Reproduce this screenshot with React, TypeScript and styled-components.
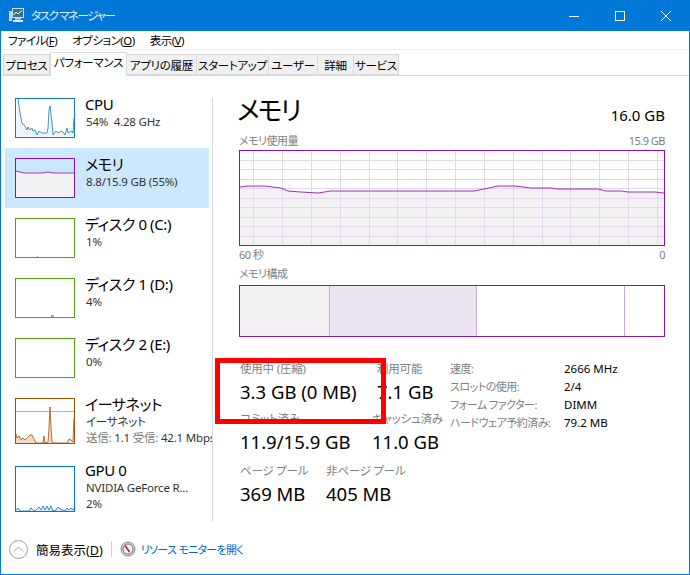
import React from 'react';
import styled, { createGlobalStyle } from 'styled-components';

const FONT = '"Noto Sans", "Noto Sans CJK JP", sans-serif';
const PURPLE = '#8b12ae';

const GlobalStyle = createGlobalStyle`
  html, body { margin: 0; padding: 0; background: #fff; }
  * { box-sizing: border-box; }
`;

const Window = styled.div`
  position: relative;
  width: 690px;
  height: 575px;
  display: flex;
  flex-direction: column;
  border: 1px solid #0078d7;
  border-top: 0;
  background: #fff;
  color: #000;
  font-family: ${FONT};
  font-size: 12px;
  font-feature-settings: "palt";
  overflow: hidden;
`;

const TitleBar = styled.div`
  height: 31px;
  flex: none;
  display: flex;
  align-items: center;
  background: #0078d7;
  color: #fff;
  padding-left: 8px;
`;

const TitleText = styled.span`
  margin-left: 7px;
  font-size: 11.5px;
  letter-spacing: -1.4px;
  line-height: 31px;
  color: #e8f2fb;
`;

const WindowButtons = styled.div`
  margin-left: auto;
  display: flex;
`;

const WindowButton = styled.div`
  width: 46px;
  height: 31px;
  display: flex;
  align-items: center;
  justify-content: center;
`;

const MenuBar = styled.div`
  height: 19px;
  flex: none;
  display: flex;
  padding-left: 7px;
  gap: 15px;
  line-height: 20px;
  font-size: 11.5px;
  letter-spacing: -0.5px;
  border-bottom: 1px solid #f0f0f0;
`;

const TabStrip = styled.div`
  height: 26px;
  flex: none;
  display: flex;
  align-items: flex-end;
  padding-left: 2px;
  border-bottom: 1px solid #d9d9d9;
`;

const Tab = styled.div<{ $width: number; $active?: boolean }>`
  width: ${({ $width }) => $width}px;
  height: ${({ $active }) => ($active ? 24 : 21)}px;
  margin-bottom: ${({ $active }) => ($active ? -1 : 0)}px;
  background: ${({ $active }) => ($active ? '#fff' : '#f0f0f0')};
  border: 1px solid #d9d9d9;
  border-left-width: ${({ $active }) => ($active ? 1 : 0)}px;
  border-bottom-width: ${({ $active }) => ($active ? 0 : 1)}px;
  font-size: 11.5px;
  letter-spacing: -0.3px;
  line-height: ${({ $active }) => ($active ? 20 : 21)}px;
  text-align: center;
  white-space: nowrap;
  position: relative;
  z-index: ${({ $active }) => ($active ? 1 : 0)};
  &:first-child { border-left-width: 1px; }
`;

const Content = styled.div`
  flex: 1;
  display: flex;
  min-height: 0;
`;

const Sidebar = styled.div`
  width: 211px;
  flex: none;
  padding: 12px 0 0 4px;
  overflow: hidden;
`;

const Item = styled.div<{ $selected?: boolean }>`
  width: 204px;
  display: flex;
  gap: 10px;
  padding: 10px 0 10px 10px;
  background: ${({ $selected }) => ($selected ? '#cce8ff' : 'transparent')};
`;

const Graph = styled.svg<{ $height?: number }>`
  width: 60px;
  height: ${({ $height }) => $height ?? 40}px;
  flex: none;
  display: block;
`;

const ItemText = styled.div<{ $top?: number }>`
  min-width: 0;
  margin-top: ${({ $top }) => $top ?? -4}px;
  white-space: nowrap;
`;

const ItemName = styled.div`
  font-size: 15px;
  letter-spacing: -0.4px;
  line-height: 20px;
`;

const ItemSub = styled.div`
  font-size: 11.5px;
  letter-spacing: -0.2px;
  line-height: 16px;
  color: #333;
  padding-left: 1px;
`;

const Muted = styled.span`
  color: #777;
`;

const Divider = styled.div`
  width: 1px;
  height: 424px;
  margin-top: 22px;
  background: #d9d9d9;
  flex: none;
`;

const Main = styled.div`
  flex: 1;
  padding: 16px 24px 0 25px;
`;

const Header = styled.div`
  height: 36px;
  display: flex;
  justify-content: space-between;
  align-items: flex-end;
`;

const Title = styled.h1`
  margin: 0 0 0 -1px;
  font-size: 26px;
  letter-spacing: -2px;
  font-weight: 400;
  line-height: 36px;
`;

const Total = styled.div`
  font-size: 15px;
  line-height: 20px;
  margin-bottom: 3px;
`;

const CaptionRow = styled.div<{ $top: number }>`
  display: flex;
  justify-content: space-between;
  padding-left: 1px;
  margin-top: ${({ $top }) => $top}px;
  font-size: 11px;
  letter-spacing: -0.5px;
  line-height: 14px;
  color: #808080;
`;

const Chart = styled.svg`
  display: block;
  width: 426px;
  height: 96px;
  margin: 2px 0 0 1px;
`;

const Composition = styled.div`
  display: flex;
  width: 426px;
  height: 52px;
  margin: 4px 0 0 1px;
  border: 1px solid ${PURPLE};
`;

const Segment = styled.div<{ $width?: number; $color: string; $line?: boolean }>`
  flex: ${({ $width }) => ($width ? `0 0 ${$width}px` : '1')};
  background: ${({ $color }) => $color};
  border-right: ${({ $line }) => ($line ? '1px solid #c9a6da' : '0')};
`;

const Stats = styled.div`
  display: flex;
  margin: 25px 0 0 2px;
`;

const StatColumn = styled.div`
  width: 210px;
  flex: none;
`;

const StatRow = styled.div<{ $first: number; $height: number }>`
  height: ${({ $height }) => $height}px;
  display: grid;
  grid-template-columns: ${({ $first }) => $first}px auto;
`;

const StatLabel = styled.div`
  font-size: 11.5px;
  letter-spacing: -0.2px;
  line-height: 14px;
  color: #808080;
  white-space: nowrap;
`;

const StatValue = styled.div`
  margin-top: 4px;
  font-size: 18.5px;
  line-height: 24px;
  white-space: nowrap;
`;

const Specs = styled.div`
  display: grid;
  grid-template-columns: 114px auto;
  grid-auto-rows: 18px;
  margin-top: -2px;
  line-height: 18px;
  white-space: nowrap;
`;

const SpecLabel = styled.div`
  font-size: 11px;
  letter-spacing: -0.5px;
  color: #808080;
`;

const SpecValue = styled.div`
  font-size: 11.5px;
`;

const Highlight = styled.div`
  position: absolute;
  left: 214px;
  top: 358px;
  width: 171px;
  height: 66px;
  border: 5px solid #ff0000;
  pointer-events: none;
`;

const Footer = styled.div`
  height: 50px;
  flex: none;
  display: flex;
  align-items: center;
  padding-left: 8px;
`;

const FooterLabel = styled.span`
  margin-left: 8px;
  font-size: 12.5px;
`;

const FooterSep = styled.div`
  width: 1px;
  height: 16px;
  margin: 0 8px 0 8px;
  background: #d0d0d0;
`;

const FooterLink = styled.span`
  margin-left: 5px;
  font-size: 11px;
  letter-spacing: -0.7px;
  color: #0066cc;
`;

const HLINES = [10, 19, 29, 38, 48, 57, 67, 76, 86];
const VLINES = [14, 43, 72, 101, 130, 158, 187, 216, 245, 274, 303, 331, 360, 389, 418];
const MEMORY_LINE =
  '1,37 9,36 26,36 42,38 49,41 62,42 79,43 92,41 235,41 245,39 259,36 276,36 292,38 312,38 319,39 359,39 367,41 382,41 389,42 416,42 425,43';

function MemoryChart() {
  return (
    <Chart viewBox="0 0 426 96">
      <polygon points={`1,95 ${MEMORY_LINE} 425,95`} fill="#f3f1f4" />
      {HLINES.map((y) => (
        <line key={y} x1="0" x2="426" y1={y + 0.5} y2={y + 0.5} stroke="#e6d5ee" />
      ))}
      {VLINES.map((x) => (
        <line key={x} x1={x + 0.5} x2={x + 0.5} y1="0" y2="96" stroke="#e6d5ee" />
      ))}
      <polyline points={MEMORY_LINE} fill="none" stroke={PURPLE} strokeWidth="1" opacity="0.85" />
      <rect x="0.5" y="0.5" width="425" height="95" fill="none" stroke={PURPLE} />
    </Chart>
  );
}

type MiniProps = { color: string; fill?: string; points?: string; height?: number; children?: React.ReactNode };

function MiniGraph({ color, fill, points, height = 40, children }: MiniProps) {
  return (
    <Graph $height={height} viewBox={`0 0 60 ${height}`}>
      {points && <polygon points={`0,${height} ${points} 60,${height}`} fill={fill} />}
      {children}
      {points && <polyline points={points} fill="none" stroke={color} strokeWidth="1" opacity="0.8" />}
      <rect x="0.5" y="0.5" width="59" height={height - 1} fill="none" stroke={color} />
    </Graph>
  );
}

const CPU_POINTS =
  '3,1 5,15 7,25 10,28 12,32 13,29 15,32 17,30 18,33 20,32 22,37 24,33 27,35 29,35 32,35 33,30 34,12 35,8 37,25 38,37 41,33 43,35 47,33 50,37 52,30 53,35 57,33 58,35 59,20';
const NET_POINTS =
  '1,36 2,40 4,38 6,42 8,40 10,42 13,39 15,37 17,37 19,41 21,45 28,45 29,38 30,45 33,44 34,30 35,9 36,28 37,44 39,45 52,45 54,41 56,42 58,44 59,20';
const GPU_POINTS =
  '1,44 3,42 5,45 14,45 16,42 18,44 20,45 24,41 26,44 28,40 30,44 32,40 34,44 36,40 38,45 41,44 43,41 45,43 48,44 50,45 52,42 54,44 56,42 58,44 59,42';

function TaskIcon() {
  return (
    <svg width="15" height="15" viewBox="0 0 15 15">
      <rect x="0" y="3" width="3" height="10" fill="#c8d0d4" />
      <rect x="3.5" y="0.5" width="11" height="9" fill="#3b6f8f" stroke="#c9d6dd" />
      <polyline points="4.5,7 7,4 9,6 13,2.5" fill="none" stroke="#ffffff" />
      <rect x="6" y="10" width="6" height="1.5" fill="#c9d6dd" />
      <rect x="4" y="12" width="10" height="2" fill="#e6e6e6" />
    </svg>
  );
}

function ResourceIcon() {
  return (
    <svg width="16" height="16" viewBox="0 0 16 16">
      <circle cx="8" cy="8" r="7" fill="#d8d8d8" stroke="#8a8a8a" />
      <circle cx="8" cy="8" r="5" fill="#f7f7f7" stroke="#6f6f6f" />
      <line x1="5" y1="4.5" x2="9.5" y2="11" stroke="#d01818" strokeWidth="1.6" />
    </svg>
  );
}

export default function App() {
  return (
    <>
      <GlobalStyle />
      <Window>
        <TitleBar>
          <TaskIcon />
          <TitleText>タスク マネージャー</TitleText>
          <WindowButtons>
            <WindowButton>
              <svg width="10" height="10" viewBox="0 0 10 10">
                <line x1="0" x2="10" y1="5.5" y2="5.5" stroke="#fff" />
              </svg>
            </WindowButton>
            <WindowButton>
              <svg width="10" height="10" viewBox="0 0 10 10">
                <rect x="0.5" y="0.5" width="9" height="9" fill="none" stroke="#fff" />
              </svg>
            </WindowButton>
            <WindowButton>
              <svg width="10" height="10" viewBox="0 0 10 10">
                <path d="M0 0 L10 10 M10 0 L0 10" stroke="#fff" />
              </svg>
            </WindowButton>
          </WindowButtons>
        </TitleBar>
        <MenuBar>
          <span>ファイル(<u>F</u>)</span>
          <span>オプション(<u>O</u>)</span>
          <span>表示(<u>V</u>)</span>
        </MenuBar>
        <TabStrip>
          <Tab $width={47}>プロセス</Tab>
          <Tab $width={77} $active>パフォーマンス</Tab>
          <Tab $width={70}>アプリの履歴</Tab>
          <Tab $width={72}>スタートアップ</Tab>
          <Tab $width={49}>ユーザー</Tab>
          <Tab $width={36}>詳細</Tab>
          <Tab $width={45}>サービス</Tab>
        </TabStrip>
        <Content>
          <Sidebar>
            <Item>
              <MiniGraph color="#117dbb" fill="#f1f6fa" points={CPU_POINTS} />
              <ItemText>
                <ItemName>CPU</ItemName>
                <ItemSub>54%&nbsp; 4.28 GHz</ItemSub>
              </ItemText>
            </Item>
            <Item $selected>
              <MiniGraph color={PURPLE} fill="#f4f2f4" points="1,13 5,14 9,15 13,15 27,15 33,14 38,15 59,15" />
              <ItemText>
                <ItemName>メモリ</ItemName>
                <ItemSub>8.8/15.9 GB (55%)</ItemSub>
              </ItemText>
            </Item>
            <Item>
              <MiniGraph color="#4da60c">
                <rect x="22" y="38" width="1" height="1" fill="#8cc665" />
              </MiniGraph>
              <ItemText>
                <ItemName>ディスク 0 (C:)</ItemName>
                <ItemSub>1%</ItemSub>
              </ItemText>
            </Item>
            <Item>
              <MiniGraph color="#4da60c">
                <rect x="36" y="37" width="3" height="2" fill="#8cc665" />
              </MiniGraph>
              <ItemText>
                <ItemName>ディスク 1 (D:)</ItemName>
                <ItemSub>4%</ItemSub>
              </ItemText>
            </Item>
            <Item>
              <MiniGraph color="#4da60c" />
              <ItemText>
                <ItemName>ディスク 2 (E:)</ItemName>
                <ItemSub>0%</ItemSub>
              </ItemText>
            </Item>
            <Item>
              <MiniGraph color="#a74f01" fill="#f2dcc8" points={NET_POINTS} height={46}>
                <line x1="0" x2="60" y1="13.5" y2="13.5" stroke="#d3a988" />
              </MiniGraph>
              <ItemText>
                <ItemName>イーサネット</ItemName>
                <ItemSub>イーサネット</ItemSub>
                <ItemSub><Muted>送信:</Muted> 1.1 <Muted>受信:</Muted> 42.1 Mbps</ItemSub>
              </ItemText>
            </Item>
            <Item>
              <MiniGraph color="#0078c8" fill="#d9ebf7" points={GPU_POINTS} height={46} />
              <ItemText $top={-6}>
                <ItemName>GPU 0</ItemName>
                <ItemSub>NVIDIA GeForce R...</ItemSub>
                <ItemSub>2%</ItemSub>
              </ItemText>
            </Item>
          </Sidebar>
          <Divider />
          <Main>
            <Header>
              <Title>メモリ</Title>
              <Total>16.0 GB</Total>
            </Header>
            <CaptionRow $top={6}>
              <span>メモリ使用量</span>
              <span>15.9 GB</span>
            </CaptionRow>
            <MemoryChart />
            <CaptionRow $top={2}>
              <span>60 秒</span>
              <span>0</span>
            </CaptionRow>
            <CaptionRow $top={5}>
              <span>メモリ構成</span>
            </CaptionRow>
            <Composition>
              <Segment $width={90} $color="#f3f1f4" $line />
              <Segment $width={147} $color="#ece6f2" $line />
              <Segment $width={148} $color="#fff" $line />
              <Segment $color="#fff" />
            </Composition>
            <Stats>
              <StatColumn>
                <StatRow $first={137} $height={50}>
                  <div>
                    <StatLabel>使用中 (圧縮)</StatLabel>
                    <StatValue>3.3 GB (0 MB)</StatValue>
                  </div>
                  <div>
                    <StatLabel>利用可能</StatLabel>
                    <StatValue>7.1 GB</StatValue>
                  </div>
                </StatRow>
                <StatRow $first={132} $height={52}>
                  <div>
                    <StatLabel>コミット済み</StatLabel>
                    <StatValue>11.9/15.9 GB</StatValue>
                  </div>
                  <div>
                    <StatLabel>キャッシュ済み</StatLabel>
                    <StatValue>11.0 GB</StatValue>
                  </div>
                </StatRow>
                <StatRow $first={86} $height={42}>
                  <div>
                    <StatLabel>ページ プール</StatLabel>
                    <StatValue>369 MB</StatValue>
                  </div>
                  <div>
                    <StatLabel>非ページ プール</StatLabel>
                    <StatValue>405 MB</StatValue>
                  </div>
                </StatRow>
              </StatColumn>
              <Specs>
                <SpecLabel>速度:</SpecLabel>
                <SpecValue>2666 MHz</SpecValue>
                <SpecLabel>スロットの使用:</SpecLabel>
                <SpecValue>2/4</SpecValue>
                <SpecLabel>フォーム ファクター:</SpecLabel>
                <SpecValue>DIMM</SpecValue>
                <SpecLabel>ハードウェア予約済み:</SpecLabel>
                <SpecValue>79.2 MB</SpecValue>
              </Specs>
            </Stats>
          </Main>
        </Content>
        <Footer>
          <svg width="19" height="19" viewBox="0 0 19 19">
            <circle cx="9.5" cy="9.5" r="9" fill="#fff" stroke="#a0a0a0" />
            <polyline points="5,11.5 9.5,7 14,11.5" fill="none" stroke="#a0a0a0" />
          </svg>
          <FooterLabel>簡易表示(<u>D</u>)</FooterLabel>
          <FooterSep />
          <ResourceIcon />
          <FooterLink>リソース モニターを開く</FooterLink>
        </Footer>
        <Highlight />
      </Window>
    </>
  );
}
